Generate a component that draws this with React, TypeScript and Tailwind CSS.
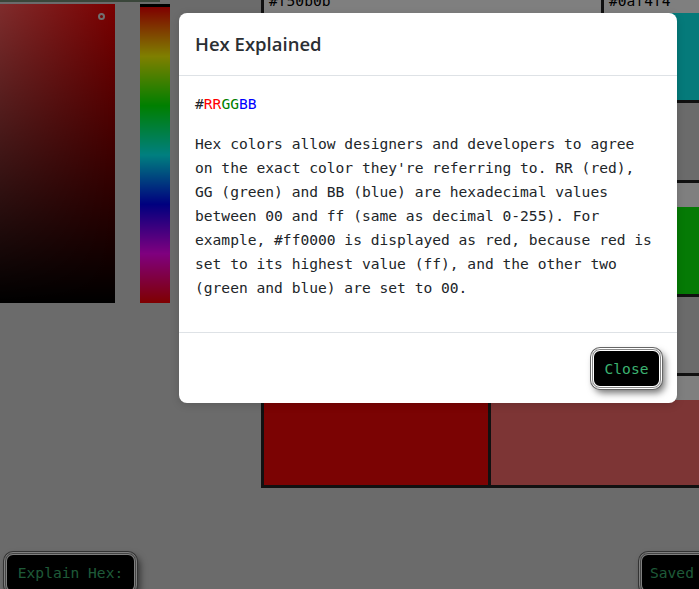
import React from "react";

const MONO = { fontFamily: '"DejaVu Sans Mono", "Liberation Mono", monospace' };

function RetroButton({ children, className = "" }: { children: React.ReactNode; className?: string }) {
  return (
    <button
      className={
        "flex items-center justify-center bg-black border border-white rounded-[9px] text-[#3cb371] text-[14.6px] leading-6 shadow-[0_0_0_1px_#666,3px_4px_7px_rgba(0,0,0,0.55),inset_0_0_0_1px_#888,inset_0_0_0_2px_#fff] " +
        className
      }
      style={MONO}
    >
      {children}
    </button>
  );
}

function Card({
  label,
  color,
  width,
  swatchH = 87,
  top = true,
}: {
  label: string;
  color: string;
  width: number;
  swatchH?: number;
  top?: boolean;
}) {
  return (
    <div
      className={"shrink-0 border-l-[3px] border-b-[3px] border-[#222] " + (top ? "border-t-[3px]" : "")}
      style={{ width }}
    >
      <div className="h-6 bg-white pl-[5px] text-[14.6px] leading-6 text-black" style={MONO}>
        {label}
      </div>
      <div style={{ height: swatchH, background: color }} />
    </div>
  );
}

export default function App() {
  return (
    <div className="relative w-[699px] h-[589px] overflow-hidden bg-[#d6d6d6]">
      <div className="flex items-start">
        {/* left: picker + hue */}
        <div className="w-[170px] shrink-0">
          <div className="h-[2px] w-[160px] bg-[#748c74]" />
          <div className="mt-[2px] flex gap-[25px]">
            <div
              className="relative w-[115px] h-[299px]"
              style={{
                background:
                  "linear-gradient(to bottom, rgba(0,0,0,0), #000), linear-gradient(to right, #ff5858, #f60000)",
              }}
            >
              <div className="absolute left-[98px] top-[9px] w-[7px] h-[7px] rounded-full border-2 border-[#e0e0e0]" />
            </div>
            <div
              className="w-[30px] h-[299px] border-t-[3px] border-black"
              style={{
                background:
                  "linear-gradient(to bottom, #ff0000, #ffff00, #00ff00, #00ffff, #0000ff, #ff00ff, #ff0000)",
              }}
            />
          </div>
        </div>

        {/* right: saved colour cards */}
        <div className="ml-[91px] -mt-[14px] flex flex-col">
          <div className="flex">
            <Card label="#f50b0b" color="#f50b0b" width={340} />
            <Card label="#0af4f4" color="#0af4f4" width={340} />
          </div>
          <div className="mt-[77px] flex">
            <Card label="#f5f50b" color="#f5f50b" width={340} />
            <Card label="#0af40a" color="#0af40a" width={340} />
          </div>
          <div className="mt-[76px] flex">
            <Card label="#f60606" color="#f60606" width={227} swatchH={85} />
            <Card label="#fa6a6a" color="#fa6a6a" width={260} swatchH={85} />
          </div>
        </div>
      </div>

      {/* bottom buttons */}
      <div className="mt-[64px] flex pl-[4px]">
        <RetroButton className="w-[133px] h-[42px] shrink-0">Explain Hex:</RetroButton>
        <RetroButton className="ml-[502px] w-[100px] h-[42px] shrink-0 justify-start pl-[10px]">Saved</RetroButton>
      </div>

      {/* backdrop */}
      <div className="absolute inset-0 bg-black/50" />

      {/* modal */}
      <div className="absolute left-[179px] top-[13px] w-[498px] bg-white rounded-lg shadow-[0_2px_8px_rgba(0,0,0,0.15)]">
        <div className="h-[63px] px-4 flex items-center border-b border-[#dee2e6]">
          <h5
            className="text-[18.5px] leading-[30px] font-semibold text-[#2b2f33]"
            style={{ fontFamily: '"Open Sans", "Noto Sans", sans-serif' }}
          >
            Hex Explained
          </h5>
        </div>
        <div className="p-4 text-[14.6px] leading-6 text-[#212529]" style={MONO}>
          <p className="mb-4">
            #<span className="text-[#ff0000]">RR</span>
            <span className="text-[#008000]">GG</span>
            <span className="text-[#0000ff]">BB</span>
          </p>
          <p className="mb-4 whitespace-nowrap">
            Hex colors allow designers and developers to agree
            <br />
            on the exact color they're referring to. RR (red),
            <br />
            GG (green) and BB (blue) are hexadecimal values
            <br />
            between 00 and ff (same as decimal 0-255). For
            <br />
            example, #ff0000 is displayed as red, because red is
            <br />
            set to its highest value (ff), and the other two
            <br />
            (green and blue) are set to 00.
          </p>
        </div>
        <div className="border-t border-[#dee2e6] pt-[15px] pb-[14px] pr-[15px] flex justify-end">
          <RetroButton className="w-[71px] h-[41px]">Close</RetroButton>
        </div>
      </div>
    </div>
  );
}
